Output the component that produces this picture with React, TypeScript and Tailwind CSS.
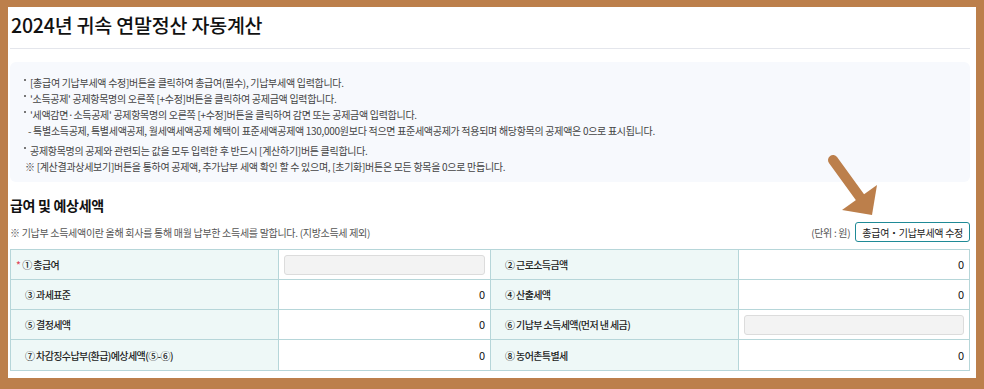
const font = { fontFamily: '"Noto Sans CJK KR", "Noto Sans", sans-serif' };

type Cell = { label: string; value?: string; input?: boolean; required?: boolean };

const rows: [Cell, Cell][] = [
  [
    { label: "① 총급여", input: true, required: true },
    { label: "② 근로소득금액", value: "0" },
  ],
  [
    { label: "③ 과세표준", value: "0" },
    { label: "④ 산출세액", value: "0" },
  ],
  [
    { label: "⑤ 결정세액", value: "0" },
    { label: "⑥ 기납부 소득세액(먼저 낸 세금)", input: true },
  ],
  [
    { label: "⑦ 차감징수납부(환급)예상세액(⑤-⑥)", value: "0" },
    { label: "⑧ 농어촌특별세", value: "0" },
  ],
];

function Bullet() {
  return <span className="mt-[4px] mr-[4px] h-[2px] w-[2px] shrink-0 self-start bg-[#777]" />;
}

function Arrow() {
  return (
    <svg className="absolute left-[822px] top-[150px]" width="64" height="72" viewBox="0 0 64 72">
      <line x1="11" y1="10" x2="40" y2="50" stroke="#bc7f4b" strokeWidth="10" strokeLinecap="round" />
      <polygon points="20,60 55,35 50,65" fill="#bc7f4b" />
    </svg>
  );
}

function TableCell({ cell, last }: { cell: Cell; last: boolean }) {
  return (
    <>
      <div className="flex items-center border-r border-[#b6d6d9] bg-[#eef8f7] pl-[14px] text-[10px] font-medium tracking-[-0.6px] text-[#222]">
        {cell.required ? <span className="-ml-[9px] mr-[2px] text-[10px] text-[#e04a5a]">*</span> : null}
        {cell.label}
      </div>
      <div className={`flex items-center justify-end px-[5px] text-[11px] text-[#111] ${last ? "" : "border-r border-[#b6d6d9]"}`}>
        {cell.input ? (
          <div className="h-[20px] w-full rounded-[3px] border border-[#dcdcdc] bg-[#f3f3f3]" />
        ) : (
          cell.value
        )}
      </div>
    </>
  );
}

export default function App() {
  return (
    <div className="relative h-[389px] w-[984px] bg-[#bc7f4b] pl-[8px] pt-[7px]" style={font}>
      <div className="h-[371px] w-[968px] bg-white pl-[2px] pr-[6px]">
        <h1 className="pl-[1px] pt-[4px] text-[19.5px] font-medium leading-[28px] tracking-[-0.2px] text-[#111]">
          2024년 귀속 연말정산 자동계산
        </h1>
        <div className="mt-[9px] h-px bg-[#e4e6ec]" />

        <div className="mt-[13px] h-[120px] rounded-[6px] bg-[#f7f9fd] pl-[14px] pt-[13px] text-[10px] leading-[16px] tracking-[-0.3px] text-[#444]">
          <p className="flex items-center">
            <Bullet />
            [총급여 기납부세액 수정]버튼을 클릭하여 총급여(필수), 기납부세액 입력합니다.
          </p>
          <p className="flex items-center">
            <Bullet />
            '소득공제' 공제항목명의 오른쪽 [+수정]버튼을 클릭하여 공제금액 입력합니다.
          </p>
          <p className="flex items-center">
            <Bullet />
            '세액감면·소득공제' 공제항목명의 오른쪽 [+수정]버튼을 클릭하여 감면 또는 공제금액 입력합니다.
          </p>
          <p className="pl-[4px]">
            - 특별소득공제, 특별세액공제, 월세액세액공제 혜택이 표준세액공제액 130,000원보다 적으면 표준세액공제가 적용되며 해당항목의 공제액은 0으로 표시됩니다.
          </p>
          <p className="mt-[4px] flex items-center">
            <Bullet />
            공제항목명의 공제와 관련되는 값을 모두 입력한 후 반드시 [계산하기]버튼 클릭합니다.
          </p>
          <p className="pl-[1px]">※ [계산결과상세보기]버튼을 통하여 공제액, 추가납부 세액 확인 할 수 있으며, [초기화]버튼은 모든 항목을 0으로 만듭니다.</p>
        </div>

        <h2 className="mt-[13px] text-[14px] font-bold leading-[20px] tracking-[-0.3px] text-[#111]">급여 및 예상세액</h2>
        <div className="mt-[7px] flex items-end justify-between">
          <p className="pb-[2px] text-[10px] tracking-[-0.3px] text-[#555]">
            ※ 기납부 소득세액이란 올해 회사를 통해 매월 납부한 소득세를 말합니다. (지방소득세 제외)
          </p>
          <div className="flex items-center gap-[5px]">
            <span className="text-[10px] tracking-[-0.3px] text-[#555]">(단위 : 원)</span>
            <button className="h-[20px] rounded-[3px] border border-[#1f8a96] bg-white px-[6px] text-[10px] tracking-[-0.3px] text-[#222]">
              총급여・기납부세액 수정
            </button>
          </div>
        </div>

        <div className="mt-[7px] grid grid-cols-[268px_212px_248px_1fr] border border-[#b6d6d9]">
          {rows.map((row, i) => (
            <div
              key={i}
              className={`col-span-4 grid h-[30px] grid-cols-subgrid ${i < rows.length - 1 ? "border-b border-[#b6d6d9]" : "h-[29px]"}`}
            >
              <TableCell cell={row[0]} last={false} />
              <TableCell cell={row[1]} last />
            </div>
          ))}
        </div>
      </div>
      <Arrow />
    </div>
  );
}
